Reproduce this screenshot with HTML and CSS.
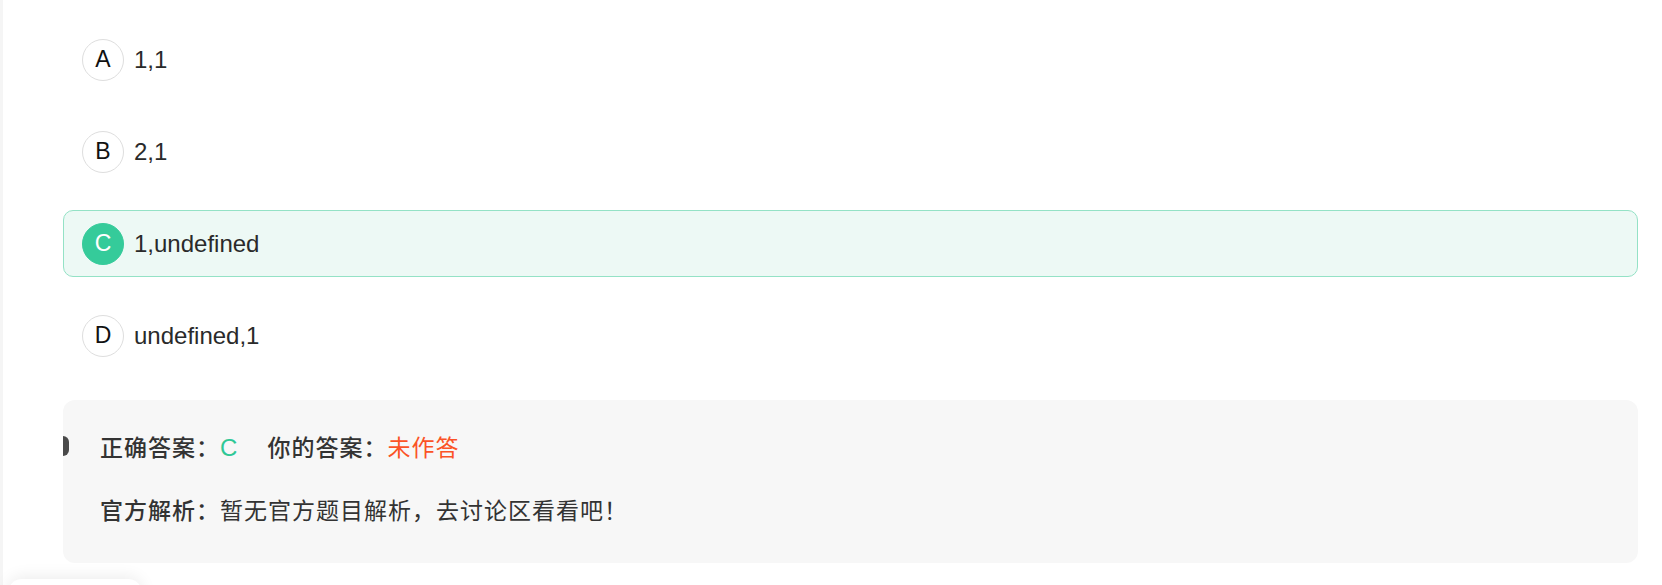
FILE: index.html
```html
<!DOCTYPE html>
<html lang="zh-CN">
<head>
    <meta charset="UTF-8">
    <meta name="viewport" content="width=device-width, initial-scale=1.0">
    <title>题目解析</title>
    <link rel="stylesheet" href="styles.css">
</head>
<body>
    <div class="page">
        <div class="options">
            <div class="option">
                <span class="option-key">A</span>
                <span class="option-text">1,1</span>
            </div>
            <div class="option">
                <span class="option-key">B</span>
                <span class="option-text">2,1</span>
            </div>
            <div class="option correct">
                <span class="option-key">C</span>
                <span class="option-text">1,undefined</span>
            </div>
            <div class="option">
                <span class="option-key">D</span>
                <span class="option-text">undefined,1</span>
            </div>
        </div>

        <div class="analysis">
            <span class="analysis-mark"></span>
            <div class="analysis-line">
                <span class="label">正确答案：</span><span class="right-answer">C</span>
                <span class="label your">你的答案：</span><span class="no-answer">未作答</span>
            </div>
            <div class="analysis-line">
                <span class="label">官方解析：</span>暂无官方题目解析，去讨论区看看吧！
            </div>
        </div>
    </div>

    <div class="float-panel"></div>
</body>
</html>
```

FILE: styles.css
```css
/* page frame */
body {
    margin: 0;
    background: #fff;
    font-family: "Liberation Sans", "Noto Sans CJK SC", sans-serif;
    color: #333;
}
.page {
    min-height: 585px;
    box-sizing: border-box;
    border-left: 3px solid #f5f5f5;
    padding: 26px 24px 0 60px;
}

/* options */
.options {
    display: flex;
    flex-direction: column;
    gap: 25px;
}
.option {
    display: flex;
    align-items: center;
    gap: 10px;
    height: 67px;
    box-sizing: border-box;
    padding: 0 18px;
    border: 1px solid transparent;
    border-radius: 10px;
    font-size: 24px;
    color: #2a2a2a;
}
.option-key {
    width: 40px;
    height: 40px;
    border: 1px solid #dedede;
    border-radius: 50%;
    display: flex;
    align-items: center;
    justify-content: center;
    color: #111;
    font-size: 23px;
}
.option.correct {
    background: #edf9f5;
    border-color: #94e2c6;
}
.option.correct .option-key {
    background: #35cb9a;
    border-color: #35cb9a;
    color: #fff;
}

/* answer analysis */
.analysis {
    position: relative;
    margin-top: 31px;
    padding: 28px 37px 36px;
    background: #f7f7f7;
    border-radius: 12px;
    font-family: "Noto Sans CJK SC", "Liberation Sans", sans-serif;
    font-size: 23px;
    line-height: 36px;
    letter-spacing: 1px;
}
.analysis-line + .analysis-line {
    margin-top: 25px;
}
.analysis-mark {
    position: absolute;
    left: 0;
    top: 36px;
    width: 6px;
    height: 20px;
    background: #4a4a4a;
    border-radius: 0 6px 6px 0;
}
.label {
    font-weight: 500;
}
.label.your {
    margin-left: 24px;
}
.right-answer {
    color: #2fc896;
    font-family: "Liberation Sans", sans-serif;
    font-size: 24px;
    letter-spacing: 0;
}
.no-answer {
    color: #fb5326;
}

/* floating panel peeking at the bottom */
.float-panel {
    position: fixed;
    left: 8px;
    top: 579px;
    width: 134px;
    height: 40px;
    background: #fff;
    border-radius: 14px;
    box-shadow: 0 -2px 16px rgba(0, 0, 0, 0.08);
}
```
